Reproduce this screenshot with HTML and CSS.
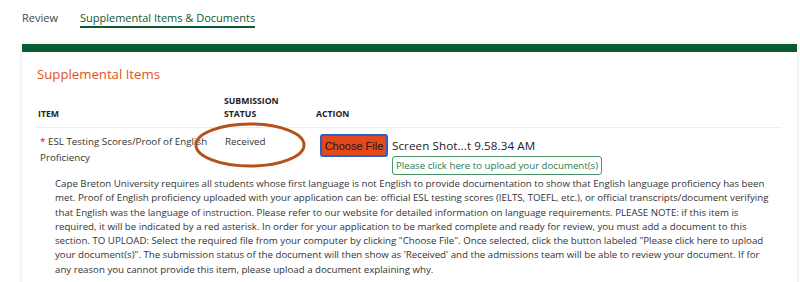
FILE: index.html
```html
<!DOCTYPE html>
<html lang="en">
<head>
    <meta charset="UTF-8">
    <title>Supplemental Items &amp; Documents</title>
    <link rel="stylesheet" href="styles.css">
</head>
<body>
    <div class="tabs">
        <a class="tab">Review</a>
        <a class="tab active">Supplemental Items &amp; Documents</a>
    </div>

    <div class="card">
        <h2 class="card-title">Supplemental Items</h2>
        <table class="items">
            <thead>
                <tr>
                    <th class="col-item">Item</th>
                    <th class="col-status">Submission<br>Status</th>
                    <th class="col-action">Action</th>
                </tr>
            </thead>
            <tbody>
                <tr class="item-row">
                    <td class="item-name"><span class="required">*</span> ESL Testing Scores/Proof of English Proficiency</td>
                    <td class="item-status">
                        Received
                        <svg class="circle-mark" width="114" height="48" viewBox="0 0 114 48">
                            <ellipse cx="57" cy="24" rx="54" ry="21" fill="none" stroke="#b4521c" stroke-width="3"/>
                        </svg>
                    </td>
                    <td class="item-action">
                        <div class="file-line">
                            <button class="choose-file">Choose File</button>
                            <span class="file-name">Screen Shot...t 9.58.34 AM</span>
                        </div>
                        <button class="upload-btn">Please click here to upload your document(s)</button>
                    </td>
                </tr>
                <tr>
                    <td colspan="3" class="item-desc">
                        Cape Breton University requires all students whose first language is not English to provide documentation to show that English language proficiency has been met. Proof of English proficiency uploaded with your application can be: official ESL testing scores (IELTS, TOEFL, etc.), or official transcripts/document verifying that English was the language of instruction. Please refer to our website for detailed information on language requirements. PLEASE NOTE: if this item is required, it will be indicated by a red asterisk. In order for your application to be marked complete and ready for review, you must add a document to this section. TO UPLOAD: Select the required file from your computer by clicking "Choose File". Once selected, click the button labeled "Please click here to upload your document(s)". The submission status of the document will then show as 'Received' and the admissions team will be able to review your document. If for any reason you cannot provide this item, please upload a document explaining why.
                    </td>
                </tr>
            </tbody>
        </table>
    </div>
</body>
</html>
```

FILE: styles.css
```css
body {
    margin: 0;
    font-family: "Open Sans", sans-serif;
    color: #333;
    background-color: #fff;
}
.tabs {
    display: flex;
    gap: 22px;
    padding: 10px 0 0 22px;
    height: 34px;
}
.tab {
    font-size: 11px;
    color: #444;
    line-height: 16px;
    height: 16px;
}
.tab.active {
    color: #0b5a31;
    border-bottom: 2px solid #0b5a31;
}
.card {
    margin: 0 3px 0 22px;
    border-top: 8px solid #0b5a31;
    box-shadow: 0 0 5px rgba(0,0,0,0.12);
    padding: 13px 15px 20px 15px;
    background-color: #fff;
}
.card-title {
    margin: 0 0 12px 0;
    font-size: 13.2px;
    font-weight: normal;
    color: #e2501f;
    line-height: 18px;
}
.items {
    border-collapse: collapse;
    width: 100%;
    font-size: 9.8px;
}
.items th {
    text-align: left;
    font-size: 8.7px;
    font-weight: bold;
    text-transform: uppercase;
    line-height: 13px;
    vertical-align: bottom;
    padding: 0 0 6px 0;
    border-bottom: 1px solid #eee;
    color: #222;
}
.col-item {
    width: 186px;
    padding-left: 1px !important;
}
.col-status {
    width: 92px;
}
.items td {
    vertical-align: top;
    line-height: 16px;
}
.item-row td {
    padding-top: 6px;
}
.item-name {
    padding-left: 3px;
    padding-right: 6px;
}
.required {
    color: #d0021b;
}
.item-status {
    position: relative;
    padding-left: 1px;
}
.circle-mark {
    position: absolute;
    left: -31px;
    top: -7px;
}
.item-action {
    padding-left: 4px;
}
.file-line {
    display: flex;
    align-items: center;
    gap: 4px;
}
.choose-file {
    font-family: "Liberation Sans", Arial, sans-serif;
    font-size: 11px;
    background-color: #e24a1e;
    color: #2a1410;
    border: 2px solid #2a5fc4;
    border-radius: 3px;
    height: 23px;
    width: 68px;
    padding: 0;
}
.file-name {
    font-size: 11.6px;
    letter-spacing: 0.1px;
    color: #222;
}
.upload-btn {
    margin: -1px 0 0 72px;
    font-family: "Open Sans", sans-serif;
    font-size: 9.7px;
    color: #2a7a4c;
    background-color: #fff;
    border: 1px solid #4a9467;
    border-radius: 3px;
    padding: 0 3px;
    height: 19px;
    display: block;
}
.item-desc {
    padding: 1px 4px 0 18px;
    line-height: 14.3px !important;
    font-size: 9.7px;
    color: #333;
}
```
